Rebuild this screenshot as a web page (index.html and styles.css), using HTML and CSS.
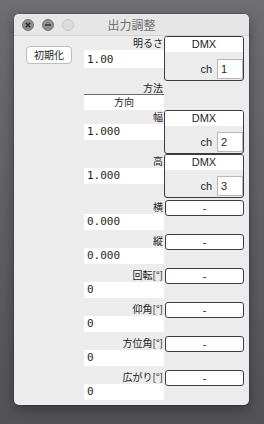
FILE: index.html
```html
<!DOCTYPE html>
<html lang="ja">
<head>
    <meta charset="UTF-8">
    <title>出力調整</title>
    <link rel="stylesheet" href="styles.css">
</head>
<body>

<div class="window">
    <div class="titlebar">
        <div class="lights">
            <span class="light close">
                <svg width="12" height="12" viewBox="0 0 12 12"><path d="M3.8 3.8 L8.2 8.2 M8.2 3.8 L3.8 8.2" stroke="#2e2e2e" stroke-width="1.6"/></svg>
            </span>
            <span class="light mini">
                <svg width="12" height="12" viewBox="0 0 12 12"><path d="M3 6 H9" stroke="#2e2e2e" stroke-width="1.6"/></svg>
            </span>
            <span class="light zoom"></span>
        </div>
        <div class="title">出力調整</div>
    </div>

    <div class="content">
        <div class="side">
            <button class="btn">初期化</button>
        </div>

        <div class="params">
            <div class="param dmx first">
                <div class="label">明るさ</div>
                <div class="value">1.00</div>
                <div class="box dmx-box">
                    <div class="box-head">DMX</div>
                    <div class="box-body">ch <span class="ch">1</span></div>
                </div>
            </div>

            <div class="method-label">方法</div>
            <div class="method">方向</div>

            <div class="param dmx">
                <div class="label">幅</div>
                <div class="value">1.000</div>
                <div class="box dmx-box">
                    <div class="box-head">DMX</div>
                    <div class="box-body">ch <span class="ch">2</span></div>
                </div>
            </div>
            <div class="param dmx last">
                <div class="label">高</div>
                <div class="value">1.000</div>
                <div class="box dmx-box">
                    <div class="box-head">DMX</div>
                    <div class="box-body">ch <span class="ch">3</span></div>
                </div>
            </div>

            <div class="param">
                <div class="label">横</div>
                <div class="value">0.000</div>
                <div class="box dash">-</div>
            </div>
            <div class="param">
                <div class="label">縦</div>
                <div class="value">0.000</div>
                <div class="box dash">-</div>
            </div>
            <div class="param">
                <div class="label">回転[°]</div>
                <div class="value">0</div>
                <div class="box dash">-</div>
            </div>
            <div class="param">
                <div class="label">仰角[°]</div>
                <div class="value">0</div>
                <div class="box dash">-</div>
            </div>
            <div class="param">
                <div class="label">方位角[°]</div>
                <div class="value">0</div>
                <div class="box dash">-</div>
            </div>
            <div class="param">
                <div class="label">広がり[°]</div>
                <div class="value">0</div>
                <div class="box dash">-</div>
            </div>
        </div>
    </div>
</div>

</body>
</html>
```

FILE: styles.css
```css
html, body {
    margin: 0;
    height: 100%;
}
body {
    background: linear-gradient(#6e6e73, #525257);
    padding: 14px;
    box-sizing: border-box;
    font-family: "Liberation Sans", "Noto Sans CJK JP", sans-serif;
    color: #1e1e1e;
}
.window {
    width: 235px;
    height: 391px;
    background-color: #ececec;
    border-radius: 5px;
    box-shadow: 0 4px 14px rgba(0, 0, 0, 0.35), 0 0 0 1px rgba(0, 0, 0, 0.12);
    overflow: hidden;
}
.titlebar {
    height: 21px;
    background-color: #e6e6e6;
    border-bottom: 1px solid #d2d2d2;
    display: flex;
    align-items: center;
    position: relative;
}
.lights {
    display: flex;
    gap: 8px;
    padding-left: 8px;
}
.light {
    width: 12px;
    height: 12px;
    border-radius: 50%;
    box-sizing: border-box;
    display: block;
}
.light svg {
    display: block;
}
.close, .mini {
    background-color: #8e8e8e;
    border: 1px solid #767676;
}
.close svg, .mini svg {
    margin: -1px;
}
.zoom {
    background-color: #dcdcdc;
    border: 1px solid #c6c6c6;
}
.title {
    position: absolute;
    left: 0;
    right: 0;
    top: 0;
    line-height: 21px;
    text-align: center;
    font-family: "Noto Sans CJK JP", sans-serif;
    font-size: 12px;
    color: #707070;
    pointer-events: none;
}
.content {
    display: flex;
}
.side {
    width: 70px;
    padding: 9px 0 0 12px;
    box-sizing: border-box;
}
.btn {
    width: 46px;
    height: 18px;
    padding: 0;
    background-color: #ffffff;
    border: 1px solid #bdbdbd;
    border-radius: 4px;
    font-family: "Noto Sans CJK JP", sans-serif;
    font-size: 10px;
    line-height: 16px;
    color: #222;
}
.params {
    width: 160px;
    display: flex;
    flex-direction: column;
}
.param {
    display: grid;
    grid-template-columns: 80px 80px;
    grid-template-rows: 14px 16px;
    height: 34px;
}
.param.dmx {
    height: 44px;
}
.param.first {
    height: 45px;
    margin-bottom: 1px;
}
.param.last {
    margin-bottom: 2px;
}
.label {
    grid-column: 1;
    grid-row: 1;
    text-align: right;
    padding-right: 1px;
    font-family: "Noto Sans CJK JP", sans-serif;
    font-size: 10px;
    line-height: 14px;
    white-space: nowrap;
}
.value {
    grid-column: 1;
    grid-row: 2;
    background-color: #ffffff;
    padding-left: 3px;
    font-family: "DejaVu Sans Mono", monospace;
    font-size: 11px;
    line-height: 16px;
}
.param.first .value {
    height: 18px;
    line-height: 19px;
}
.box {
    grid-column: 2;
    grid-row: 1 / 3;
    border: 1px solid #3c3c3c;
    border-radius: 3px;
    box-sizing: border-box;
    font-size: 11px;
}
.dash {
    height: 16px;
    margin-left: 1px;
    background-color: #ffffff;
    text-align: center;
    line-height: 14px;
}
.dmx-box {
    grid-row: 1 / 4;
    height: 44px;
    display: flex;
    flex-direction: column;
    overflow: hidden;
}
.param.first .dmx-box {
    height: 45px;
}
.box-head {
    height: 15px;
    background-color: #ffffff;
    text-align: center;
    line-height: 15px;
}
.box-body {
    flex: 1;
    display: flex;
    justify-content: flex-end;
    align-items: flex-end;
    gap: 5px;
    padding-bottom: 1px;
    line-height: 20px;
}
.ch {
    width: 26px;
    height: 20px;
    box-sizing: border-box;
    background-color: #ffffff;
    border: 1px solid #b8b8b8;
    padding-left: 3px;
    line-height: 18px;
}
.method-label {
    height: 12px;
    width: 80px;
    text-align: right;
    padding-right: 1px;
    box-sizing: border-box;
    font-family: "Noto Sans CJK JP", sans-serif;
    font-size: 10px;
    line-height: 12px;
}
.method {
    width: 80px;
    height: 16px;
    box-sizing: border-box;
    border-top: 1px solid #6a6a6a;
    background-color: #ffffff;
    text-align: center;
    font-family: "Noto Sans CJK JP", sans-serif;
    font-size: 10px;
    line-height: 14px;
}
```
